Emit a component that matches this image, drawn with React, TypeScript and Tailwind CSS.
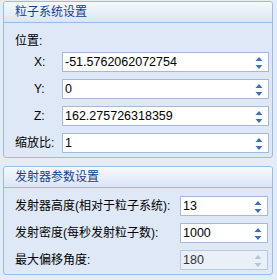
const font = "font-['Liberation_Sans','Noto_Sans_CJK_SC',sans-serif]";

function Spin({ disabled }: { disabled?: boolean }) {
  const c = disabled ? "#b7c4d6" : "#3f6fb5";
  return (
    <svg width="8" height="14" viewBox="0 0 8 14" className="absolute right-[5px] top-[3px]">
      <path d="M4 1 L7.5 5 L0.5 5 Z" fill={c} />
      <path d="M0.5 9 L7.5 9 L4 13 Z" fill={c} />
    </svg>
  );
}

function NumInput({ value, width, disabled }: { value: string; width: string; disabled?: boolean }) {
  return (
    <div
      className={`relative h-[20px] shrink-0 ${width} border ${
        disabled ? "border-[#b9c8dc] bg-[#eaf0f8] text-[#333]" : "border-[#a3bad9] bg-white text-black"
      } pl-[2px] text-[12.5px] leading-[18px]`}
    >
      {value}
      <Spin disabled={disabled} />
    </div>
  );
}

function Panel({ title, className, children }: { title: string; className: string; children: React.ReactNode }) {
  return (
    <section
      className={`mx-[3px] mr-[4px] overflow-hidden rounded-[3px] border border-[#99bbe8] bg-[#dfe8f6] ${className}`}
    >
      <div className="h-[21px] border-b border-[#99bbe8] bg-gradient-to-b from-[#f5f9fe] to-[#dae6f4] pl-[11px] text-[12px] leading-[21px] text-[#15428b]">
        {title}
      </div>
      {children}
    </section>
  );
}

export default function App() {
  return (
    <div className={`h-[280px] w-[277px] overflow-hidden bg-[#e4ecf7] pt-[1px] ${font}`}>
      <Panel title="粒子系统设置" className="h-[157px]">
        <div className="whitespace-nowrap pl-[11px] pt-[9px] text-[12px] text-black">
          <div className="h-[19px] leading-[19px]">位置:</div>
          <div className="mt-[1px] flex flex-col gap-[7px]">
            {[
              ["X:", "-51.5762062072754"],
              ["Y:", "0"],
              ["Z:", "162.275726318359"],
            ].map(([k, v]) => (
              <div key={k} className="flex h-[20px] items-center">
                <span className="w-[47px] pl-[19px]">{k}</span>
                <NumInput value={v} width="w-[207px]" />
              </div>
            ))}
            <div className="flex h-[20px] items-center">
              <span className="w-[47px]">缩放比:</span>
              <NumInput value="1" width="w-[207px]" />
            </div>
          </div>
        </div>
      </Panel>
      <Panel title="发射器参数设置" className="mt-[8px] h-[109px]">
        <div className="flex flex-col gap-[7px] whitespace-nowrap pl-[11px] pt-[8px] text-[12px] text-black">
          {[
            ["发射器高度(相对于粒子系统):", "13", false],
            ["发射密度(每秒发射粒子数):", "1000", false],
            ["最大偏移角度:", "180", true],
          ].map(([k, v, d]) => (
            <div key={k as string} className="flex h-[20px] items-center">
              <span className="w-[165px]">{k}</span>
              <NumInput value={v as string} width="w-[88px]" disabled={d as boolean} />
            </div>
          ))}
        </div>
      </Panel>
    </div>
  );
}
